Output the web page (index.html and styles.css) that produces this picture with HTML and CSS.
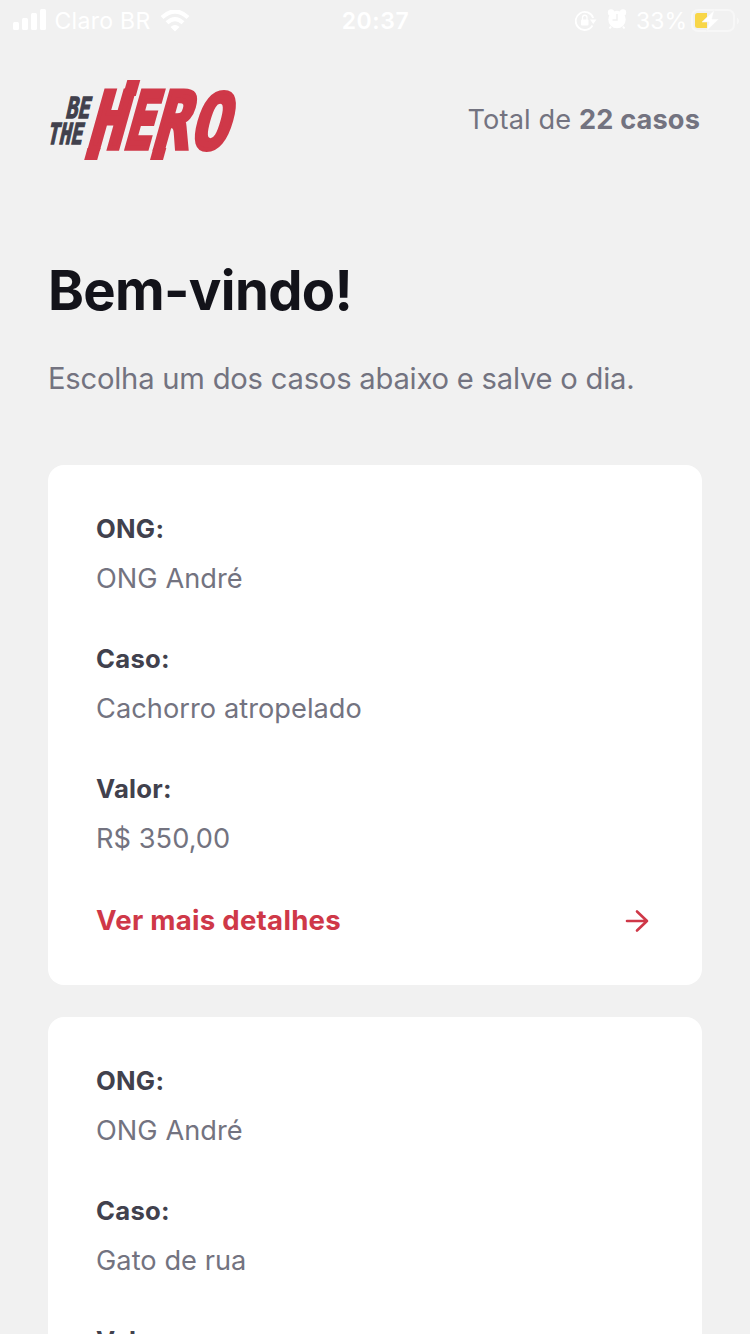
FILE: index.html
```html
<!DOCTYPE html>
<html lang="pt-BR">
<head>
<meta charset="utf-8">
<title>Be The Hero</title>
<link rel="stylesheet" href="styles.css">
</head>
<body>
<div class="screen">
  <div class="status">
    <div class="status-left">
      <svg class="signal" width="34" height="22" viewBox="0 0 34 22"><rect x="0" y="13" width="6" height="8" rx="1.5"/><rect x="9" y="9" width="6" height="12" rx="1.5"/><rect x="18" y="4" width="6" height="17" rx="1.5"/><rect x="27" y="0" width="6" height="21" rx="1.5"/></svg>
      <span class="carrier">Claro BR</span>
      <svg class="wifi" width="30" height="22" viewBox="0 0 30 22"><path d="M2 7.500Q15-4.500 28 7.500M7 12.700Q15 5.500 23 12.700" fill="none" stroke="#fff" stroke-width="4.200"/><path d="M10.500 17Q15 13 19.500 17L15 21.500Z"/></svg>
    </div>
    <span class="clock">20:37</span>
    <div class="status-right">
      <svg class="lock" width="22" height="22" viewBox="0 0 22 22"><path d="M17.500 15.500A9 9 0 1 1 18.200 8" fill="none" stroke="#fff" stroke-width="1.800"/><path d="M15 9.500H21.500L18.200 14Z"/><rect x="6" y="9.500" width="7.500" height="6" rx="1"/><path d="M7.500 10V7.500a2.200 2.200 0 0 1 4.500 0V10" fill="none" stroke="#fff" stroke-width="1.300"/></svg>
      <svg class="alarm" width="20" height="22" viewBox="0 0 20 22"><circle cx="4" cy="4.500" r="3.200"/><circle cx="16" cy="4.500" r="3.200"/><circle cx="10" cy="11.500" r="8.700"/><path d="M4 18.500L2.500 20.500M16 18.500L17.500 20.500" stroke="#fff" stroke-width="2"/><path d="M10 6V12H5.500" fill="none" stroke="#f1f1f1" stroke-width="1.500"/></svg>
      <span class="percent">33%</span>
      <svg class="battery" width="49" height="24" viewBox="0 0 49 24"><rect x="1" y="1" width="42" height="21" rx="6" fill="none" stroke="#f7f7f7" stroke-width="2"/><path d="M46 8.500Q48 9.500 48 12T46 15.500Z" fill="#f7f7f7"/><path d="M6.500 4H16V19H6.500Q4 19 4 16.500V6.500Q4 4 6.500 4Z" fill="#f8d648"/><path d="M23.500 1L11 13H18L15.500 22L28 10H21Z" stroke="#f1f1f1" stroke-width=".6"/></svg>
    </div>
  </div>

  <header class="header">
    <svg class="logo" width="190" height="80" viewBox="0 0 190 80">
      <g class="logo-small">
        <text transform="matrix(.69 0 -.22 1 17 37.500)">BE</text>
        <text transform="matrix(.67 0 -.22 1 -1.500 64)">THE</text>
      </g>
      <g class="logo-big">
        <text transform="matrix(.76 0 -.28 1 38 68.300)">H</text>
        <text transform="matrix(.6 0 -.28 1 74.500 68.300)">E</text>
        <text transform="matrix(.74 0 -.28 1 103.500 68.300)">R</text>
        <text class="logo-last" transform="matrix(.82 0 -.28 1 140.500 68.800)">O</text>
      </g>
      <g class="logo-bars">
        <path d="M39.500 68H52.500L49.200 80H36.200Z"/>
        <path d="M79.300 0H92.300L87.800 16H74.800Z"/>
        <path d="M105.300 68H118.300L115 80H102Z"/>
      </g>
    </svg>
    <p class="total">Total de <strong>22 casos</strong></p>
  </header>

  <h1 class="title">Bem-vindo!</h1>
  <p class="description">Escolha um dos casos abaixo e salve o dia.</p>

  <main class="list">
    <article class="card">
      <h2 class="label">ONG:</h2>
      <p class="value">ONG André</p>
      <h2 class="label">Caso:</h2>
      <p class="value">Cachorro atropelado</p>
      <h2 class="label">Valor:</h2>
      <p class="value">R$ 350,00</p>
      <div class="details">
        <span>Ver mais detalhes</span>
        <svg class="arrow" width="24" height="24" viewBox="0 0 24 24"><path d="M2 12H22M12 2.500L22 12L12 21.500"/></svg>
      </div>
    </article>
    <article class="card">
      <h2 class="label">ONG:</h2>
      <p class="value">ONG André</p>
      <h2 class="label">Caso:</h2>
      <p class="value">Gato de rua</p>
      <h2 class="label">Valor:</h2>
    </article>
  </main>
</div>
</body>
</html>
```
FILE: styles.css
```css
* { box-sizing: border-box; }
body, h1, h2, p { margin: 0; }
body { background: #f1f1f1; font-family: Inter, Roboto, sans-serif; color: #737380; }
svg { display: block; flex: none; fill: #fff; }
.screen { height: 1334px; overflow: hidden; padding: 0 48px; }
.status { height: 41px; margin: 0 -48px; padding: 0 10px 0 13px; display: grid; grid-template-columns: 1fr auto 1fr; align-items: center; color: #fff; font-size: 23px; white-space: nowrap; }
.status-left, .status-right { display: flex; align-items: center; }
.status-right { justify-content: flex-end; }
.signal { margin-top: -1px; }
.carrier { margin-left: 7.5px; letter-spacing: .3px; }
.wifi { margin-left: 9px; }
.clock { font-weight: 600; letter-spacing: .6px; margin-left: -2px; }
.alarm { margin-left: 10px; margin-top: -3px; }
.percent { margin-left: 9px; }
.battery { margin-left: 4px; }
.header { margin-top: 39px; height: 80px; display: flex; align-items: center; justify-content: space-between; }
.logo { overflow: visible; }
.logo text { font-family: "DejaVu Sans Mono", monospace; font-weight: 700; }
.logo-small { font-size: 29px; fill: #41414d; stroke: #41414d; stroke-width: 1.3; }
.logo-big { font-size: 78px; fill: #cf3848; stroke: #cf3848; stroke-width: 5.5; }
.logo-last { font-size: 77px; stroke-width: 4; }
.logo-bars { fill: #cf3848; }
.total { font-size: 27.2px; line-height: 40px; margin-right: 2px; letter-spacing: .13px; }
.title { margin-top: 99px; font-size: 54.4px; line-height: 62px; font-weight: 700; letter-spacing: -.65px; color: #13131a; }
.description { margin-top: 38px; font-size: 29.2px; line-height: 40px; letter-spacing: -.22px; }
.list { margin-top: 66px; }
.card { height: 520px; padding: 48px; margin-bottom: 32px; border-radius: 16px; background: #fff; }
.label { font-size: 25.7px; line-height: 32px; font-weight: 700; letter-spacing: .25px; color: #41414d; }
.value { margin: 16px 0 47px; font-size: 27.2px; line-height: 35px; letter-spacing: .05px; }
.details { display: flex; align-items: center; justify-content: space-between; font-size: 27.6px; line-height: 35px; font-weight: 700; letter-spacing: .27px; color: #cf3848; }
.arrow { margin-right: 5px; fill: none; stroke: #cf3848; stroke-width: 2.6; stroke-linecap: round; stroke-linejoin: round; }
```
